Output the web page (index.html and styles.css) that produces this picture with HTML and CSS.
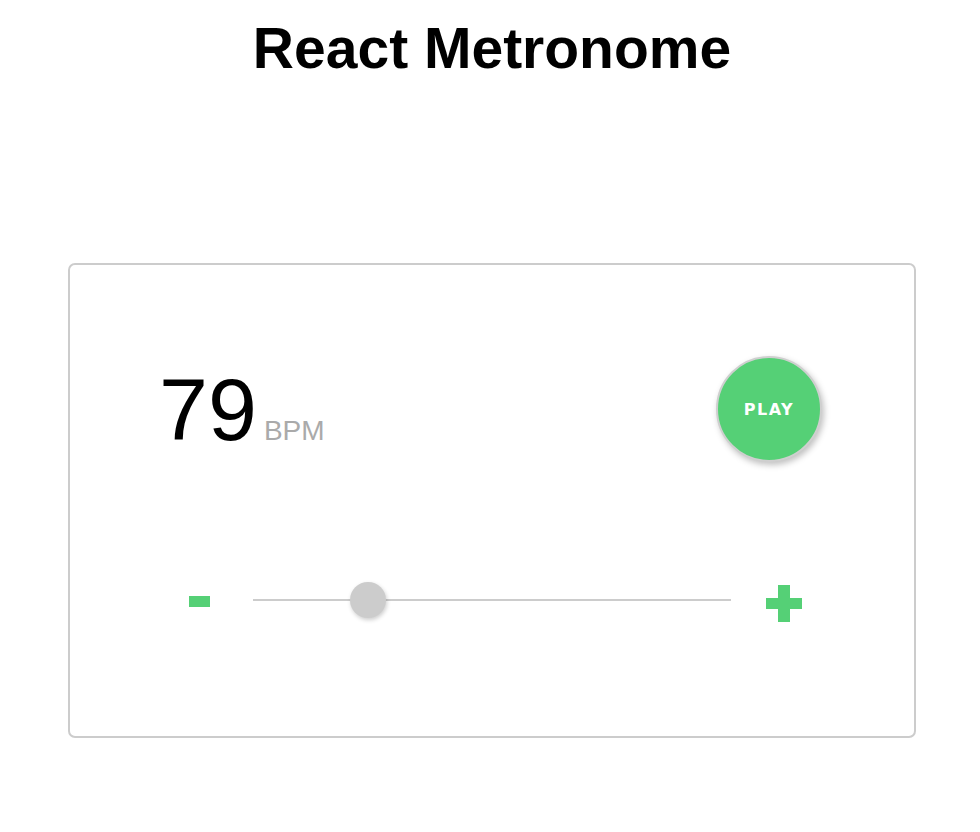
FILE: index.html
```html
<!DOCTYPE html>
<html>
<head>
<meta charset="utf-8">
<title>React Metronome</title>
<link rel="stylesheet" href="styles.css">
</head>
<body>
<div class="app">
  <h1 class="title">React Metronome</h1>
  <div class="card">
    <div class="top-row">
      <div class="tempo"><span class="bpm-value">79</span><span class="bpm-unit">BPM</span></div>
      <button class="play">PLAY</button>
    </div>
    <div class="slider-row">
      <div class="minus"></div>
      <div class="track">
        <div class="thumb" style="left: 115px"></div>
      </div>
      <div class="plus"><span class="plus-h"></span><span class="plus-v"></span></div>
    </div>
  </div>
</div>
</body>
</html>
```

FILE: styles.css
```css
html, body {
  margin: 0;
  padding: 0;
  background: #fff;
}
body {
  font-family: "Liberation Sans", Arial, sans-serif;
}
.app {
  padding-left: 68px;
  width: 848px;
}
.title {
  margin: 0;
  padding-top: 15px;
  text-align: center;
  font-size: 57px;
  line-height: 66px;
  font-weight: bold;
  color: #000;
}
.card {
  margin-top: 182px;
  box-sizing: border-box;
  width: 848px;
  height: 475px;
  border: 2px solid #cccccc;
  border-radius: 7px;
  padding: 91px 92px 0 92px;
}
.top-row {
  display: flex;
  align-items: center;
  justify-content: space-between;
  height: 106px;
}
.tempo {
  display: flex;
  align-items: baseline;
  gap: 7px;
  margin-top: 2px;
  margin-left: -3px;
}
.bpm-value {
  font-size: 88px;
  line-height: 1;
  color: #000;
}
.bpm-unit {
  font-size: 28px;
  color: #aaaaaa;
}
.play {
  width: 106px;
  height: 106px;
  border-radius: 50%;
  border: 2px solid #cfcfcf;
  background: #55d076;
  color: #fff;
  font-family: "DejaVu Sans", sans-serif;
  font-weight: bold;
  font-size: 16px;
  letter-spacing: 1.5px;
  box-shadow: 2px 3px 6px rgba(0, 0, 0, 0.25);
  padding: 0;
}
.slider-row {
  display: flex;
  align-items: center;
  height: 40px;
  margin-top: 118px;
  margin-left: 27px;
}
.minus {
  width: 21px;
  height: 11px;
  background: #55d076;
  margin-right: 43px;
  margin-top: 3px;
}
.track {
  position: relative;
  width: 478px;
  height: 2px;
  background: #cccccc;
  margin-right: 35px;
}
.thumb {
  position: absolute;
  top: -17px;
  width: 36px;
  height: 36px;
  margin-left: -18px;
  border-radius: 50%;
  background: #cccccc;
  box-shadow: 1px 2px 4px rgba(0, 0, 0, 0.2);
}
.plus {
  position: relative;
  width: 36px;
  height: 37px;
  margin-top: 6px;
}
.plus-h {
  position: absolute;
  left: 0;
  top: 13px;
  width: 36px;
  height: 11px;
  background: #55d076;
}
.plus-v {
  position: absolute;
  left: 12px;
  top: 0;
  width: 12px;
  height: 37px;
  background: #55d076;
}
```
